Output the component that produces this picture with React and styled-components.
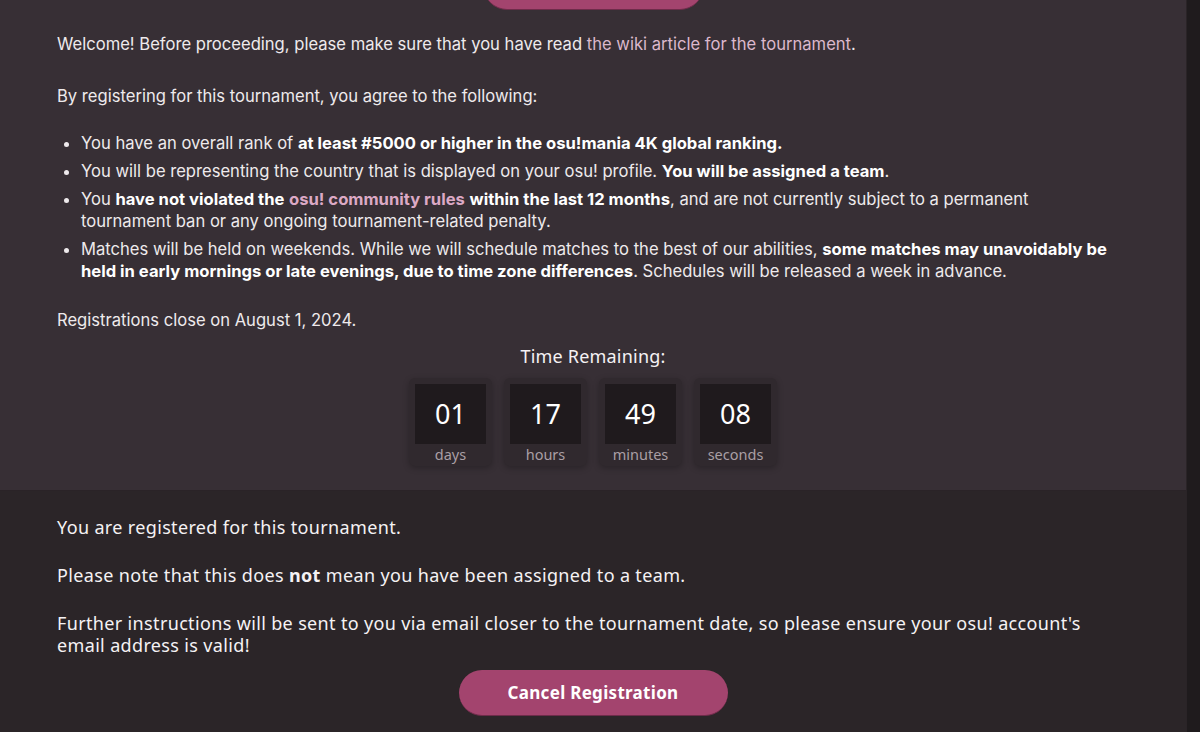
import React from "react"
import styled, { createGlobalStyle } from "styled-components"

const GlobalStyle = createGlobalStyle`
  html, body {
    margin: 0;
    padding: 0;
    background: #2b2528;
  }
  * {
    box-sizing: border-box;
  }
`

const roundFont = `"Noto Sans", Lato, sans-serif`

const Page = styled.div`
  display: flex;
  width: 1200px;
  height: 732px;
  overflow: hidden;
`

const Main = styled.main`
  flex: 1;
  display: flex;
  flex-direction: column;
`

const ScrollTrack = styled.div`
  width: 14px;
  background: #1f1b1d;
  border-left: 1px solid #2a2427;
`

const InfoSection = styled.section`
  background: #372f35;
  padding: 0 57px 24px;
  border-bottom: 1px solid #2a2327;
  font-family: Inter, "Liberation Sans", sans-serif;
  font-size: 16.6px;
  line-height: 22px;
  color: #eeeaec;

  p {
    margin: 0 0 30px;
  }
  strong {
    color: #ffffff;
    font-weight: 700;
  }
`

const RegisterSection = styled.section`
  flex: 1;
  background: #2b2528;
  padding: 25px 57px 0;
  font-family: ${roundFont};
  font-size: 18px;
  letter-spacing: 0.35px;
  line-height: 22px;
  color: #f5f2f4;

  p {
    margin: 0 0 26px;
  }
  p:last-of-type {
    margin-bottom: 14px;
  }
  strong {
    font-weight: 700;
  }
`

const PillButton = styled.button`
  display: block;
  margin: ${(p) => (p.$top ? "-36px auto 23px" : "0 auto")};
  width: ${(p) => p.$width}px;
  height: 46px;
  border: none;
  border-bottom: 1px solid #6e2c4a;
  border-radius: 23px;
  background: #a3446e;
  color: #ffffff;
  font-family: ${roundFont};
  font-weight: 700;
  font-size: 17px;
  letter-spacing: 0.3px;
  cursor: pointer;
`

const Link = styled.a`
  color: ${(p) => (p.$bold ? "#dca9c5" : "#dcb8cc")};
  font-weight: ${(p) => (p.$bold ? 700 : 400)};
  text-decoration: none;
`

const Rules = styled.ul`
  margin: -5px 0 27px;
  padding: 0 16px 0 24px;

  li {
    margin-bottom: 6px;
  }
  li:last-child {
    margin-bottom: 0;
  }
`

const Closing = styled.p`
  && {
    margin: 0 0 14px;
  }
`

const CountdownTitle = styled.div`
  text-align: center;
  font-family: ${roundFont};
  font-size: 18px;
  letter-spacing: 0.2px;
  line-height: 22px;
  color: #f5f2f4;
  margin-bottom: 11px;
`

const Countdown = styled.div`
  display: flex;
  justify-content: center;
  gap: 12px;
`

const TimeBox = styled.div`
  width: 83px;
  padding: 6px 6px 0;
  background: #30292e;
  border-radius: 6px;
  box-shadow: 0 2px 6px rgba(0, 0, 0, 0.25);
  text-align: center;
  font-family: ${roundFont};
`

const TimeValue = styled.div`
  height: 60px;
  display: flex;
  align-items: center;
  justify-content: center;
  background: #1f1a1d;
  color: #ffffff;
  font-size: 27px;
`

const TimeLabel = styled.div`
  height: 22px;
  line-height: 20px;
  font-size: 14.5px;
  color: #a99fa5;
`

const countdown = [
  { value: "01", label: "days" },
  { value: "17", label: "hours" },
  { value: "49", label: "minutes" },
  { value: "08", label: "seconds" },
]

export default function App() {
  return (
    <>
      <GlobalStyle />
      <Page>
        <Main>
          <InfoSection>
            <PillButton $top $width={219}>Register</PillButton>
            <p>
              Welcome! Before proceeding, please make sure that you have read{" "}
              <Link href="#">the wiki article for the tournament</Link>.
            </p>
            <p>By registering for this tournament, you agree to the following:</p>
            <Rules>
              <li>
                You have an overall rank of{" "}
                <strong>at least #5000 or higher in the osu!mania 4K global ranking.</strong>
              </li>
              <li>
                You will be representing the country that is displayed on your osu! profile.{" "}
                <strong>You will be assigned a team</strong>.
              </li>
              <li>
                You <strong>have not violated the</strong>{" "}
                <Link href="#" $bold>osu! community rules</Link>{" "}
                <strong>within the last 12 months</strong>, and are not currently subject to a
                permanent tournament ban or any ongoing tournament-related penalty.
              </li>
              <li>
                Matches will be held on weekends. While we will schedule matches to the best of our
                abilities,{" "}
                <strong>
                  some matches may unavoidably be held in early mornings or late evenings, due to
                  time zone differences
                </strong>
                . Schedules will be released a week in advance.
              </li>
            </Rules>
            <Closing>Registrations close on August 1, 2024.</Closing>
            <CountdownTitle>Time Remaining:</CountdownTitle>
            <Countdown>
              {countdown.map((c) => (
                <TimeBox key={c.label}>
                  <TimeValue>{c.value}</TimeValue>
                  <TimeLabel>{c.label}</TimeLabel>
                </TimeBox>
              ))}
            </Countdown>
          </InfoSection>
          <RegisterSection>
            <p>You are registered for this tournament.</p>
            <p>
              Please note that this does <strong>not</strong> mean you have been assigned to a team.
            </p>
            <p>
              Further instructions will be sent to you via email closer to the tournament date, so
              please ensure your osu! account's email address is valid!
            </p>
            <PillButton $width={269}>Cancel Registration</PillButton>
          </RegisterSection>
        </Main>
        <ScrollTrack />
      </Page>
    </>
  )
}
